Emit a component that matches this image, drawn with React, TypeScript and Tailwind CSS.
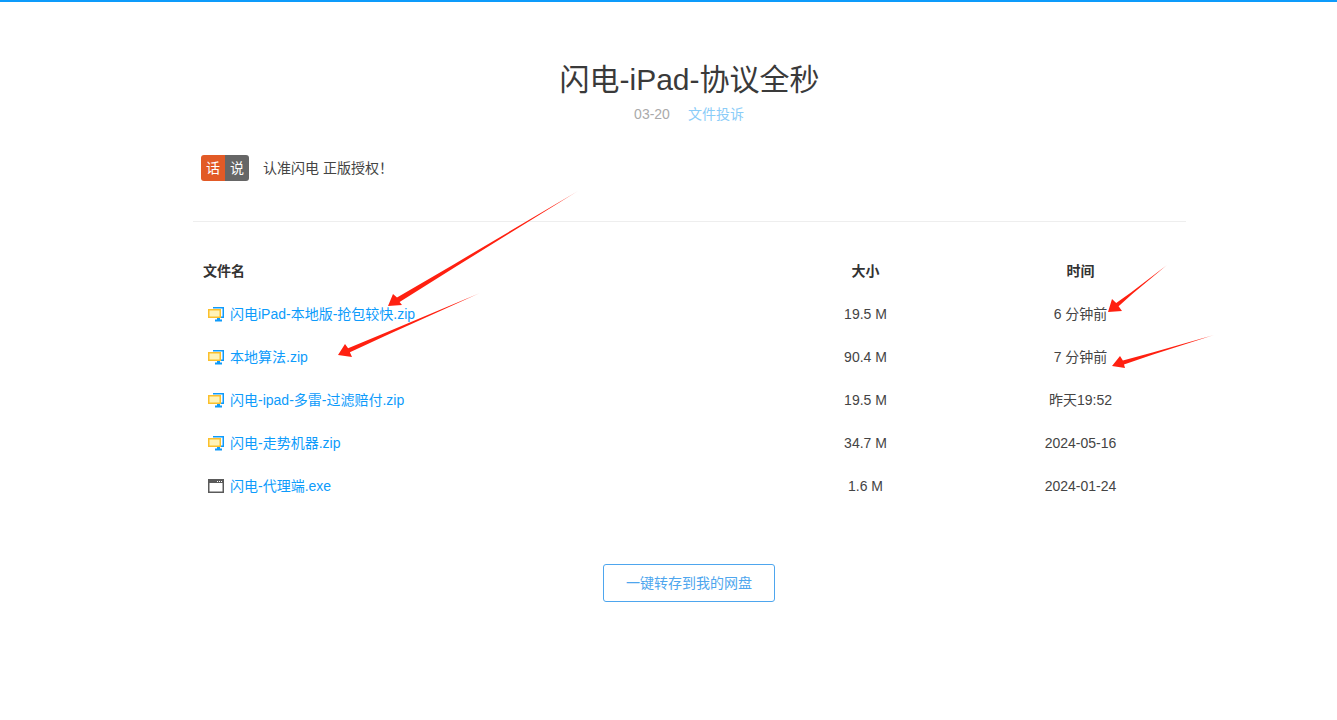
const font = "font-['Liberation_Sans','Noto_Sans_CJK_SC',sans-serif]";

function ZipIcon() {
  return (
    <svg width="16" height="16" viewBox="0 0 16 16" className="shrink-0">
      <path d="M5 1.75H15.25V11.25H5" fill="none" stroke="#0e9bfb" strokeWidth="1.5" />
      <rect x="0.75" y="3.75" width="11.5" height="7.5" fill="#fff3b8" stroke="#fbc02d" strokeWidth="1.5" />
      <rect x="9" y="12" width="3" height="2" fill="#0e9bfb" />
      <rect x="7" y="13.5" width="7" height="2" fill="#0e9bfb" />
    </svg>
  );
}

function ExeIcon() {
  return (
    <svg width="16" height="16" viewBox="0 0 16 16" className="shrink-0">
      <rect x="0.75" y="1.75" width="14.5" height="12.5" fill="#fff" stroke="#5a5a5a" strokeWidth="1.5" />
      <rect x="1" y="2" width="14" height="3" fill="#5a5a5a" />
      <rect x="9" y="3" width="1" height="1" fill="#fff" />
      <rect x="11" y="3" width="1" height="1" fill="#fff" />
      <rect x="13" y="3" width="1" height="1" fill="#fff" />
    </svg>
  );
}

const files = [
  { name: "闪电iPad-本地版-抢包较快.zip", size: "19.5 M", time: "6 分钟前", icon: "zip" },
  { name: "本地算法.zip", size: "90.4 M", time: "7 分钟前", icon: "zip" },
  { name: "闪电-ipad-多雷-过滤赔付.zip", size: "19.5 M", time: "昨天19:52", icon: "zip" },
  { name: "闪电-走势机器.zip", size: "34.7 M", time: "2024-05-16", icon: "zip" },
  { name: "闪电-代理端.exe", size: "1.6 M", time: "2024-01-24", icon: "exe" },
];

const arrows = [
  { id: "a1", tail: [578, 191], head: [388, 306], points: "578,191 453.7,264.4 397,297.5 393,294 388,306 402,305 399.6,302 455.3,267" },
  { id: "a2", tail: [480, 293], head: [338, 355], points: "480,293 387.2,332.1 348.1,348.2 345,344 338,355 352,357 349.9,352.2 388.2,334.5" },
  { id: "a3", tail: [1167, 265], head: [1108, 312], points: "1167,265 1131,292.4 1116.2,303 1112,299 1108,312 1122,311 1118.6,306.2 1132.2,294" },
  { id: "a4", tail: [1214, 335], head: [1112, 366], points: "1214,335 1152.5,352.6 1122.9,360.6 1120,356 1112,366 1125,368 1124,364.4 1153.1,354.6" },
];

export default function App() {
  return (
    <div className={`relative min-h-[720px] bg-white border-t-2 border-[#0d9bfb] text-[#333] ${font}`}>
      <div className="w-[993px] ml-[193px] flex flex-col">
        <h1 className="mt-[58px] h-[40px] text-[30px] leading-[40px] text-center font-normal text-[#3a3a3a]">
          闪电-iPad-协议全秒
        </h1>
        <div className="mt-[4px] h-[20px] pr-[1px] flex justify-center gap-[18px] text-sm leading-[20px]">
          <span className="text-[#aaa]">03-20</span>
          <span className="text-[#8accf8]">文件投诉</span>
        </div>
        <div className="mt-[31px] h-[26px] pl-[8px] flex items-center gap-[14px]">
          <div className="flex rounded-[3px] overflow-hidden text-sm leading-[26px] text-white">
            <span className="w-[24px] h-[26px] text-center bg-[#e25a26]">话</span>
            <span className="w-[24px] h-[26px] text-center bg-[#666]">说</span>
          </div>
          <span className="text-sm text-[#444]">认准闪电 正版授权！</span>
        </div>
        <div className="mt-[40px] border-t border-[#eee]" />
        <div className="mt-[27px] h-[43px] flex items-center text-sm font-bold text-[#333]">
          <div className="flex-1 pl-[10px]">文件名</div>
          <div className="w-[219px] text-center">大小</div>
          <div className="w-[211px] text-center">时间</div>
        </div>
        {files.map((f) => (
          <div key={f.name} className="h-[43px] flex items-center text-sm text-[#444]">
            <div className="flex-1 pl-[15px] flex items-center gap-[6px] text-[#0d9bfb]">
              {f.icon === "zip" ? <ZipIcon /> : <ExeIcon />}
              <span>{f.name}</span>
            </div>
            <div className="w-[219px] text-center">{f.size}</div>
            <div className="w-[211px] text-center">{f.time}</div>
          </div>
        ))}
        <div className="mt-[57px] pr-[1px] flex justify-center">
          <button className="w-[172px] h-[38px] rounded-[3px] border border-[#4ea6ee] text-sm text-[#4ea6ee] bg-white">
            一键转存到我的网盘
          </button>
        </div>
      </div>
      <svg className="absolute left-0 top-[-2px] pointer-events-none" width="1337" height="720">
        <defs>
          {arrows.map((a) => (
            <linearGradient
              key={a.id}
              id={a.id}
              gradientUnits="userSpaceOnUse"
              x1={a.tail[0]}
              y1={a.tail[1]}
              x2={a.head[0]}
              y2={a.head[1]}
            >
              <stop offset="0" stopColor="#ff2010" stopOpacity="0.5" />
              <stop offset="0.1" stopColor="#ff2010" />
              <stop offset="1" stopColor="#ff2010" />
            </linearGradient>
          ))}
        </defs>
        {arrows.map((a) => (
          <polygon key={a.id} points={a.points} fill={`url(#${a.id})`} />
        ))}
      </svg>
    </div>
  );
}
